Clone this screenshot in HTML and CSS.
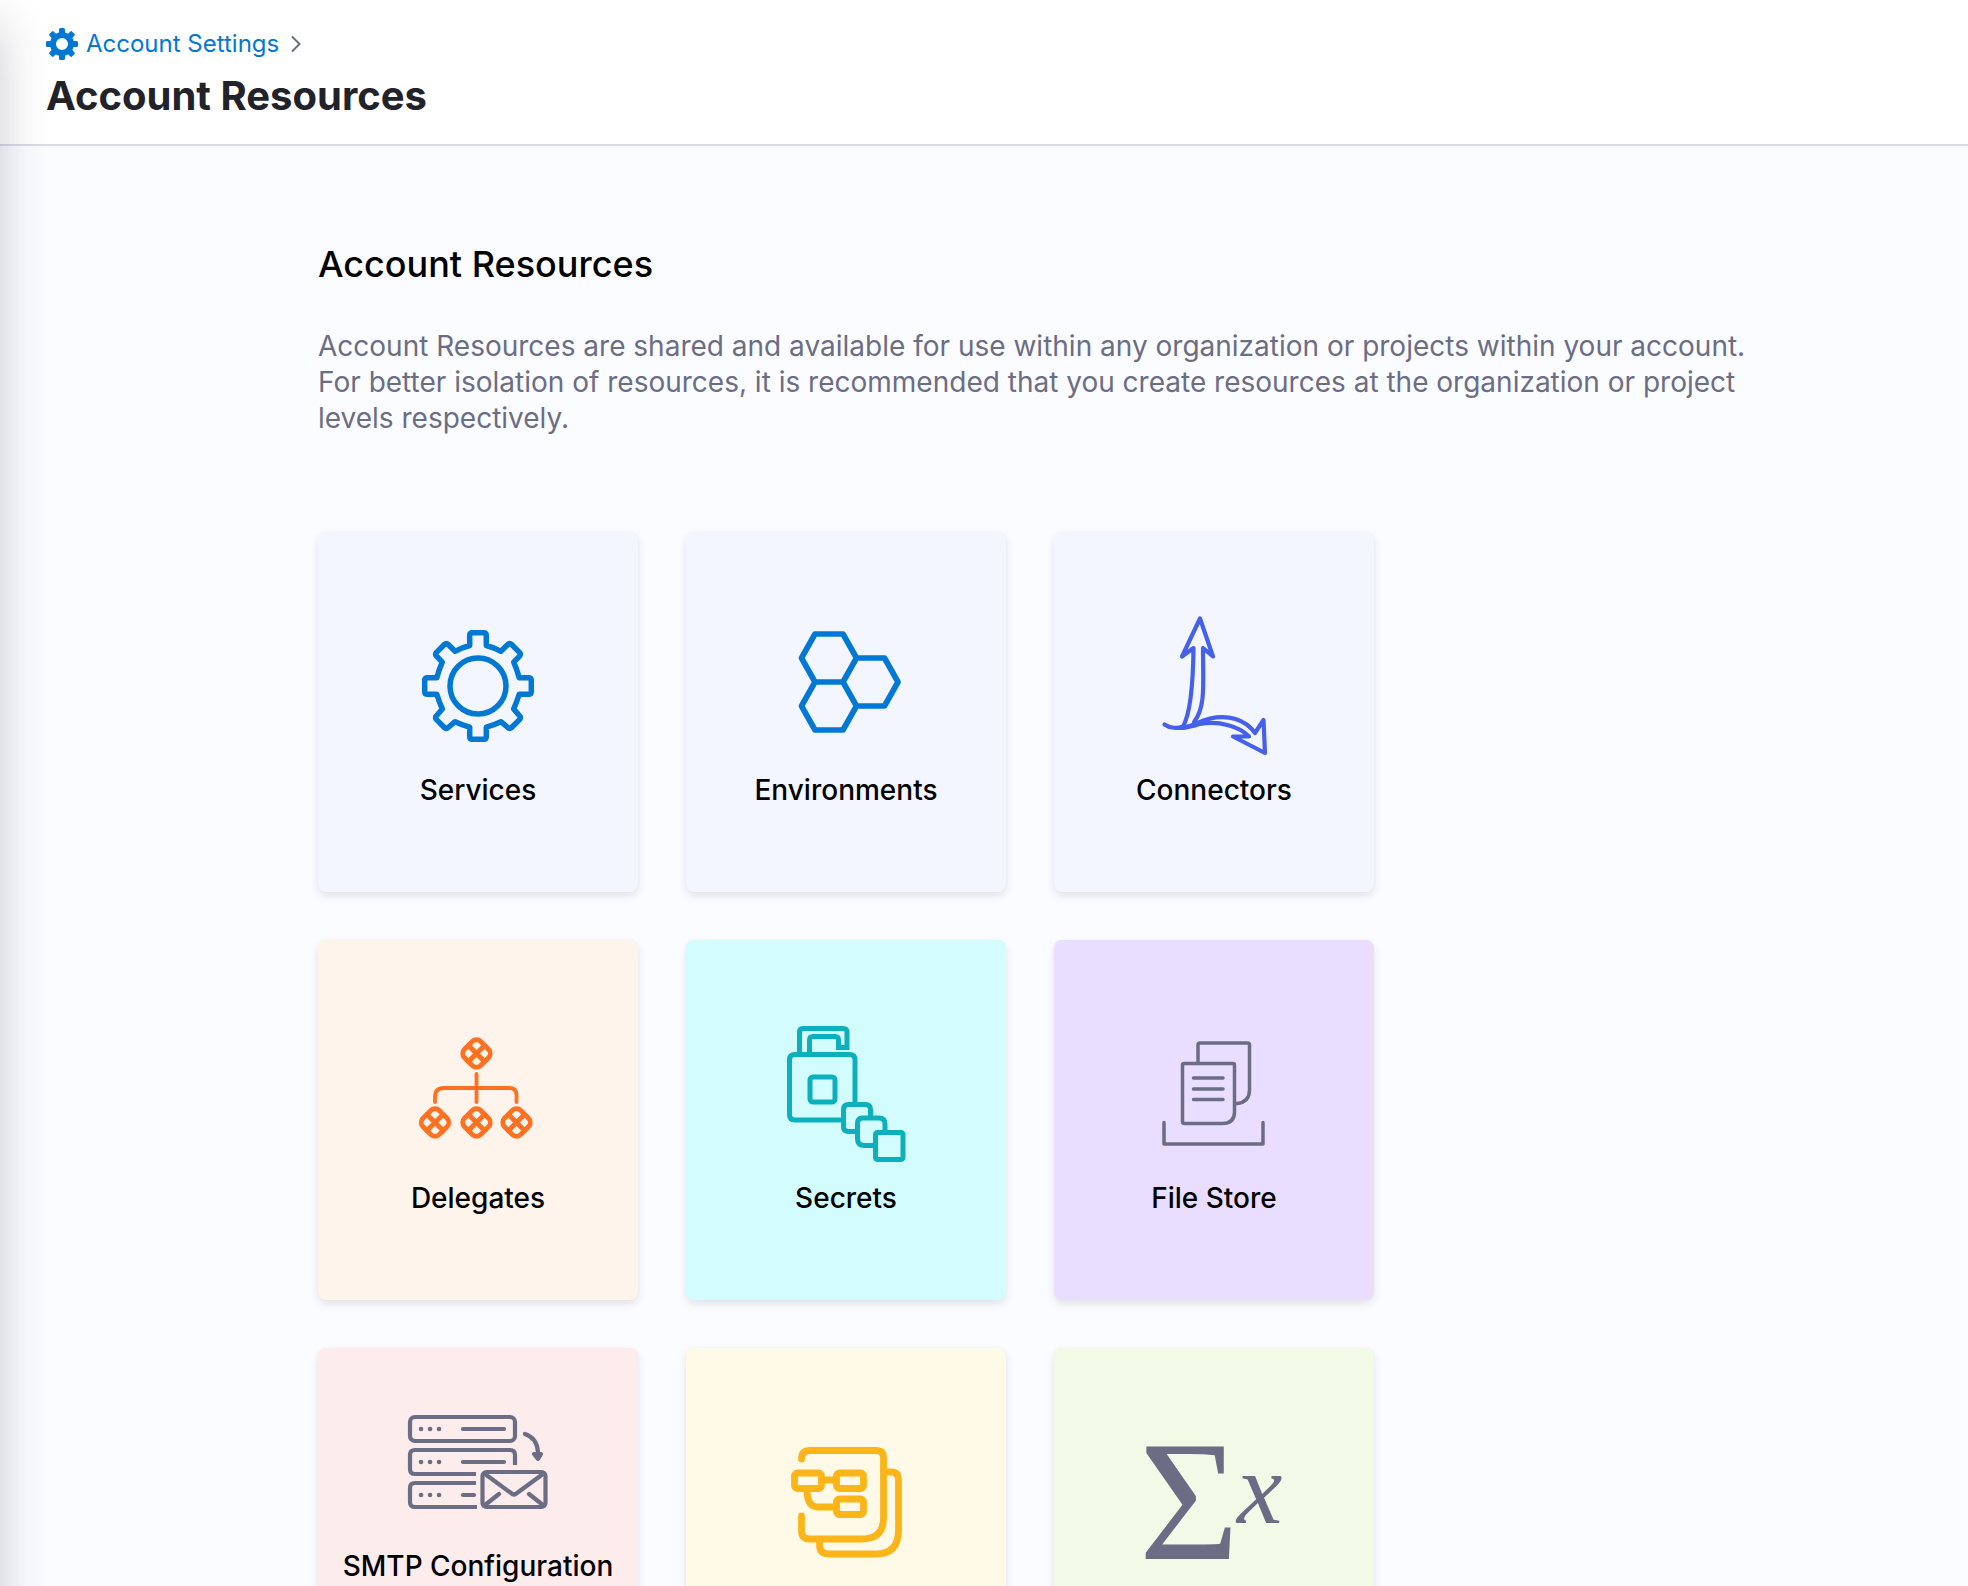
FILE: index.html
```html
<!DOCTYPE html>
<html lang="en">
<head>
<meta charset="utf-8">
<title>Account Resources</title>
<link rel="stylesheet" href="styles.css">
</head>
<body>
<div class="nav-edge"></div>
<header class="page-header">
  <nav class="breadcrumb">
    <a class="breadcrumb-link" href="#">
      <svg class="breadcrumb-icon" viewBox="-16 -16 32 32">
        <g fill="currentColor">
          <path fill-rule="evenodd" d="M0-12A12 12 0 1 1 0 12A12 12 0 1 1 0-12ZM0-6A6 6 0 1 0 0 6A6 6 0 1 0 0-6Z"/>
          <g id="tooth"><rect x="-3" y="-16" width="6" height="7" rx="1.5"/><rect x="-3" y="9" width="6" height="7" rx="1.5"/></g>
          <use href="#tooth" transform="rotate(45)"/>
          <use href="#tooth" transform="rotate(90)"/>
          <use href="#tooth" transform="rotate(135)"/>
        </g>
      </svg>
      Account Settings
    </a>
    <svg class="chevron" viewBox="0 0 10 18"><path d="M1 1.500L8.500 9L1 16.500"/></svg>
  </nav>
  <h1 class="page-title">Account Resources</h1>
</header>
<main class="content">
  <h2 class="section-title">Account Resources</h2>
  <p class="section-text">Account Resources are shared and available for use within any organization or projects within your account. For better isolation of resources, it is recommended that you create resources at the organization or project levels respectively.</p>
  <div class="cards">
    <a class="card card-blue" href="#">
      <svg class="card-icon icon-blue" viewBox="-70 -70 140 140">
        <circle r="28" stroke-width="5.500"/>
        <path d="M-8.300-40.500V-50.500Q-8.300-53.300-5.500-53.300H5.500Q8.300-53.300 8.300-50.500V-40.500Q16-38.500 22.900-34.700L29.800-41.500Q31.700-43.400 33.600-41.500L41.500-33.600Q43.400-31.700 41.500-29.800L35.700-23.800Q38.800-17 41.200-8.300H50.500Q53.300-8.300 53.300-5.500V5.500Q53.300 8.300 50.500 8.300H41.200Q38.800 16 35.700 22.900L41.500 29.800Q43.400 31.700 41.500 33.600L33.600 41.500Q31.700 43.400 29.800 41.500L22.900 35.700Q16 39 8.300 41.200V50.500Q8.300 53.300 5.500 53.300H-5.500Q-8.300 53.300-8.300 50.500V41.200Q-16 39-22.900 35.700L-29.800 41.500Q-31.700 43.400-33.600 41.500L-41.500 33.600Q-43.400 31.700-41.500 29.800L-35.700 22.900Q-38.800 16-41.200 8.300H-50.500Q-53.300 8.300-53.300 5.500V-5.500Q-53.300-8.300-50.500-8.300H-41.200Q-38.800-17-35.700-23.800L-41.500-29.800Q-43.400-31.700-41.500-33.600L-33.600-41.500Q-31.700-43.400-29.800-41.500L-22.900-34.700Q-16-38.500-8.300-40.500Z" stroke-width="5.500"/>
      </svg>
      <span class="card-label">Services</span>
    </a>
    <a class="card card-blue" href="#">
      <svg class="card-icon icon-blue" viewBox="0 0 140 140">
        <path stroke-width="5.700" d="M39 18H67L80.500 42L67 66H39L25.500 42ZM39 66L25.500 90L39 114H67L80.500 90L67 66M80.500 42H108.500L122 66L108.500 90H80.500"/>
      </svg>
      <span class="card-label">Environments</span>
    </a>
    <a class="card card-blue" href="#">
      <svg class="card-icon icon-indigo" viewBox="0 0 140 140">
        <path stroke-width="4.200" d="M20.500 108.500C26 112.500 34 112.500 39 110.500C45 100 49 77 49.500 32L38 40.500L56 2.500L69 40.500L59 32C59 67 62 91 50 106M39 111C50 111 52 105.500 66 102.500C84 98.500 101 103 111 117L119.500 104L121 137L89 120.500H105C96 110.500 75 104.500 56 108C48 110 44 112 34 112"/>
      </svg>
      <span class="card-label">Connectors</span>
    </a>
    <a class="card card-orange" href="#">
      <svg class="card-icon icon-orange" viewBox="0 0 140 140">
        <g id="node" stroke-width="4.800">
          <rect x="-11.500" y="-11.500" width="23" height="23" rx="6" transform="translate(68.500 29.500) rotate(45)"/>
          <path d="M60.500 21.500L76.500 37.500M76.500 21.500L60.500 37.500"/>
        </g>
        <use href="#node" x="-41.500" y="69"/>
        <use href="#node" y="69"/>
        <use href="#node" x="40" y="69"/>
        <path stroke-width="3.800" d="M68.500 50V78M27 78V73Q27 64 36 64H101Q108.500 64 108.500 71V78"/>
      </svg>
      <span class="card-label">Delegates</span>
    </a>
    <a class="card card-cyan" href="#">
      <svg class="card-icon icon-teal" viewBox="0 0 140 140">
        <g stroke-width="5">
          <path d="M23.500 28V8Q23.500 4.500 27 4.500H67Q71 4.500 71 8V23.500H62.500V16Q62.500 12.500 59 12.500H37Q33.500 12.500 33.500 16V28" stroke-linecap="butt" stroke-linejoin="miter"/>
          <path d="M65 96H19Q13.500 96 13.500 90.500V36Q13.500 30.500 19 30.500H73.500Q79 30.500 79 36V79"/>
          <rect x="34" y="53" width="25" height="25" rx="3"/>
          <path d="M79 107.500H72.500Q67.500 107.500 67.500 102.500V85.500Q67.500 80.500 72.500 80.500H89.500Q94.500 80.500 94.500 85.500V93"/>
          <path d="M97 121.500H88.500Q81.500 121.500 81.500 114.500V99.500Q81.500 94 87 94H103Q109 94 109 100V108"/>
          <rect x="99.500" y="108.500" width="27.500" height="27" rx="2"/>
        </g>
      </svg>
      <span class="card-label">Secrets</span>
    </a>
    <a class="card card-purple" href="#">
      <svg class="card-icon icon-slate" viewBox="0 0 140 140">
        <path stroke-width="3.500" d="M38.500 41Q38.500 39.500 40 39.500H89Q90.500 39.500 90.500 41V88Q90.500 99.500 78 99.500H40.500Q38.500 99.500 38.500 97.500ZM54 38V21Q54 19 56 19H103.500Q105.500 19 105.500 21V66Q105.500 78 93 79.500M49.500 54H79M49.500 65H79M49.500 75.500H79M20 98.500V120H119V98.500"/>
      </svg>
      <span class="card-label">File Store</span>
    </a>
    <a class="card card-red card-raised" href="#">
      <svg class="card-icon icon-slate" viewBox="0 0 140 140">
        <g stroke-width="4.200">
          <rect x="2" y="25" width="105" height="24" rx="5"/>
          <path d="M107 73V63Q107 58 102 58H7Q2 58 2 63V77Q2 82 7 82H68M68 91H7Q2 91 2 96V110Q2 115 7 115H69" stroke-linecap="butt"/>
          <path d="M55 37H96M55 70H96M55 103H66"/>
          <rect x="74.500" y="80" width="63" height="35" rx="4"/>
          <path d="M77 82L103 101Q106 104 109 101L135 82M77 113L91 102M135 113L121 102M117 42Q129 46 130 60"/>
          <path d="M126 62H133L130 67Z"/>
        </g>
        <path stroke-width="4.500" d="M13 37h.1M22 37h.1M31 37h.1M13 70h.1M22 70h.1M31 70h.1M13 103h.1M22 103h.1M31 103h.1"/>
      </svg>
      <span class="card-label">SMTP Configuration</span>
    </a>
    <a class="card card-yellow" href="#">
      <svg class="card-icon icon-amber" viewBox="-10 0 140 140">
        <g stroke-width="6.800">
          <path d="M15.500 27Q15.500 18.500 24 18.500H90Q97.500 18.500 97.500 26V86Q97.500 107 76 107H24Q15.500 107 15.500 99V84"/>
          <path d="M98 40H105Q112.500 40 112.500 48V98Q112.500 122 90 122H43Q33.500 122 33.500 113V108"/>
          <rect x="8.500" y="41" width="27" height="15.500" rx="3"/>
          <rect x="50.500" y="41" width="27" height="15.500" rx="3"/>
          <rect x="50.500" y="67" width="27" height="15.500" rx="3"/>
          <path d="M36 48H50M21 58Q21 75 32 75H50"/>
        </g>
      </svg>
    </a>
    <a class="card card-green" href="#">
      <svg class="card-icon" viewBox="0 0 140 140">
        <text class="sigma" x="-5" y="127">Σ</text>
        <text class="variable" x="93" y="91">x</text>
      </svg>
    </a>
  </div>
</main>
</body>
</html>
```
FILE: styles.css
```css
* { box-sizing: border-box; }

body {
  margin: 0;
  height: 100vh;
  display: flex;
  flex-direction: column;
  overflow: hidden;
  background: #fbfcff;
  color: #000;
  font-family: Inter, "Liberation Sans", sans-serif;
  font-optical-sizing: none;
}

a { color: inherit; text-decoration: none; }

/* Shadow thrown on the page by the navigation drawer to its left */
.nav-edge {
  position: fixed;
  top: 24px;
  bottom: -60px;
  left: -60px;
  width: 60px;
  box-shadow: 0 0 48px rgba(40, 41, 61, 0.24);
  z-index: 1;
}

.page-header {
  flex: none;
  padding: 28px 46px 24px;
  background: #fff;
  border-bottom: 2px solid #d9dae5;
}

.breadcrumb {
  display: flex;
  align-items: center;
  gap: 12px;
  font-size: 24px;
  line-height: 32px;
}

.breadcrumb-link {
  display: flex;
  align-items: center;
  gap: 8px;
  color: #0278d5;
}

.breadcrumb-icon { width: 32px; height: 32px; }

.chevron {
  width: 10px;
  height: 18px;
  fill: none;
  stroke: #6b6d85;
  stroke-width: 2;
}

.page-title {
  margin: 12px 0 0;
  font-size: 40px;
  line-height: 48px;
  font-weight: 700;
  color: #22222a;
}

.content {
  flex: 1;
  min-height: 0;
  overflow: hidden;
  padding: 94px 200px 0 318px;
}

.section-title {
  margin: 0;
  font-size: 36px;
  line-height: 48px;
  font-weight: 500;
}

.section-text {
  max-width: 1440px;
  margin: 40px 0 96px;
  font-size: 28px;
  line-height: 36px;
  color: #6b6d85;
}

.cards {
  display: flex;
  flex-wrap: wrap;
  gap: 48px;
  max-width: 1060px;
}

.card {
  width: 320px;
  height: 360px;
  padding-top: 84px;
  display: flex;
  flex-direction: column;
  align-items: center;
  gap: 16px;
  border-radius: 8px;
  box-shadow: 0 0 2px rgba(40, 41, 61, 0.04), 0 4px 8px rgba(96, 97, 112, 0.16);
}

.card-raised { padding-top: 44px; }

.card-label {
  font-size: 28px;
  line-height: 36px;
  font-weight: 500;
}

.card-icon {
  width: 140px;
  height: 140px;
  flex: none;
  fill: none;
  stroke-linecap: round;
  stroke-linejoin: round;
  overflow: visible;
}

.card-blue { background: #f3f6ff; }
.card-orange { background: #fff4eb; }
.card-cyan { background: #d3fcfe; }
.card-purple { background: #e9deff; }
.card-red { background: #fcecec; }
.card-yellow { background: #fff9e7; }
.card-green { background: #f0fae6; }

.icon-blue { stroke: #0278d5; }
.icon-indigo { stroke: #4560ea; }
.icon-orange { stroke: #ff7020; }
.icon-teal { stroke: #0bb0bc; }
.icon-slate { stroke: #6b6d85; }
.icon-amber { stroke: #fcb519; }

.sigma,
.variable {
  fill: #6b6d85;
  font-family: "Liberation Serif", serif;
}

.sigma { font-size: 172px; }

.variable {
  font-size: 102px;
  font-style: italic;
}
```
